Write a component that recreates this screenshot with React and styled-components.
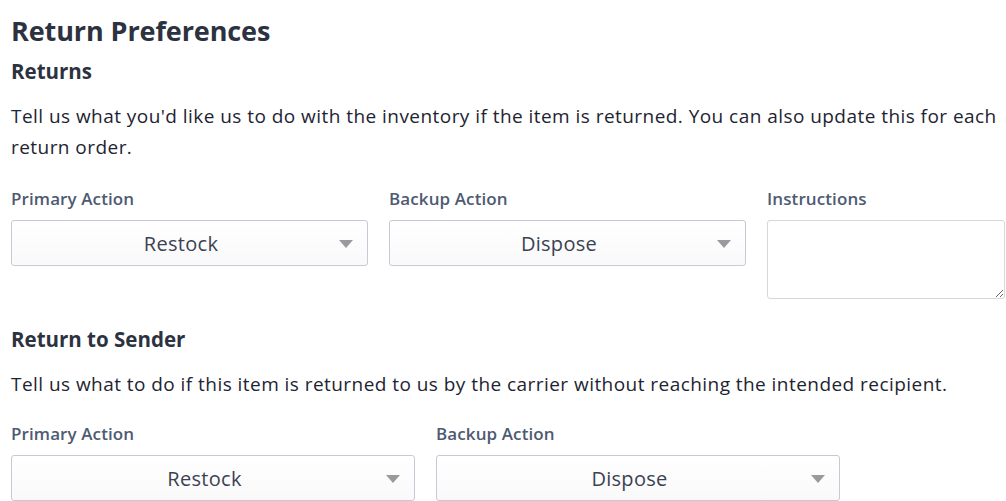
import React from "react";
import styled, { createGlobalStyle } from "styled-components";

const GlobalStyle = createGlobalStyle`
  * { box-sizing: border-box; }
  html, body {
    margin: 0;
    padding: 0;
    background: #ffffff;
    overflow: hidden;
  }
  body {
    font-family: "Open Sans", "Noto Sans", sans-serif;
    color: #1f2533;
  }
`;

function SelectBox({ value }) {
  return (
    <Select>
      <SelectValue>{value}</SelectValue>
      <Caret viewBox="0 0 14 8" aria-hidden="true">
        <path d="M0 0 H14 L7 8 Z" fill="#9a9a9e" />
      </Caret>
    </Select>
  );
}

export default function App() {
  return (
    <>
      <GlobalStyle />
      <Page>
        <Title>Return Preferences</Title>
        <Section>
          <SectionTitle>Returns</SectionTitle>
          <Text>
            Tell us what you'd like us to do with the inventory if the item is
            returned. You can also update this for each return order.
          </Text>
          <FieldRow $cols="3fr 3fr 2fr" $top={26}>
            <Field>
              <Label>Primary Action</Label>
              <SelectBox value="Restock" />
            </Field>
            <Field>
              <Label>Backup Action</Label>
              <SelectBox value="Dispose" />
            </Field>
            <Field>
              <Label>Instructions</Label>
              <TextArea />
            </Field>
          </FieldRow>
        </Section>
        <Section>
          <SectionTitle>Return to Sender</SectionTitle>
          <Text>
            Tell us what to do if this item is returned to us by the carrier
            without reaching the intended recipient.
          </Text>
          <FieldRow $cols="404px 404px" $top={24}>
            <Field>
              <Label>Primary Action</Label>
              <SelectBox value="Restock" />
            </Field>
            <Field>
              <Label>Backup Action</Label>
              <SelectBox value="Dispose" />
            </Field>
          </FieldRow>
        </Section>
      </Page>
    </>
  );
}

const Page = styled.div`
  width: 1005px;
  padding: 14px 0 0 11px;
`;
const Title = styled.h1`
  margin: 0;
  font-size: 27px;
  line-height: 34px;
  font-weight: 700;
  letter-spacing: -0.1px;
  color: #2c323f;
`;
const Section = styled.section`
  display: flex;
  flex-direction: column;
`;
const SectionTitle = styled.h2`
  margin: 9px 0 0;
  font-size: 20.5px;
  line-height: 28px;
  font-weight: 700;
  color: #2c323f;
`;
const Text = styled.p`
  margin: 16px 0 0;
  font-size: 19px;
  line-height: 31px;
  letter-spacing: 0.45px;
  color: #1e2431;
`;
const FieldRow = styled.div`
  display: grid;
  grid-template-columns: ${(p) => p.$cols};
  column-gap: 21px;
  margin-top: ${(p) => p.$top}px;
  margin-bottom: 17px;
`;
const Field = styled.div`
  display: flex;
  flex-direction: column;
`;
const Label = styled.label`
  font-size: 17px;
  line-height: 20px;
  font-weight: 600;
  letter-spacing: 0.1px;
  color: #4e5a72;
  margin-bottom: 11px;
`;
const Select = styled.div`
  position: relative;
  height: 46px;
  display: flex;
  align-items: center;
  justify-content: center;
  padding-right: 17px;
  border: 1px solid #c7cad5;
  border-radius: 3px;
  background: linear-gradient(#ffffff, #f9f9fa);
`;
const SelectValue = styled.span`
  font-size: 20px;
  letter-spacing: 0.3px;
  color: #3b4252;
`;
const Caret = styled.svg`
  position: absolute;
  right: 14px;
  top: 19px;
  width: 14px;
  height: 8px;
`;
const TextArea = styled.textarea`
  height: 79px;
  border: 1px solid #d6d7dc;
  border-radius: 3px;
  background: #ffffff;
  resize: vertical;
  font-family: inherit;
`;
